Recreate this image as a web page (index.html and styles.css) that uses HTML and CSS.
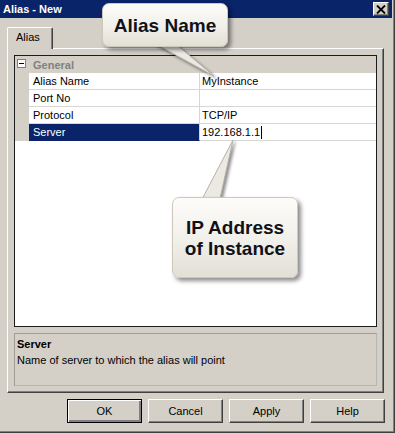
FILE: index.html
```html
<!DOCTYPE html>
<html>
<head>
<meta charset="utf-8">
<title>Alias - New</title>
<link rel="stylesheet" href="styles.css">
</head>
<body>
<div class="window">
  <div class="titlebar">
    <span class="title">Alias - New</span>
    <span class="close">
      <svg width="10" height="9" viewBox="0 0 10 9"><path d="M1 0.5 L9 8.5 M9 0.5 L1 8.5" stroke="#000" stroke-width="1.8" fill="none"/></svg>
    </span>
  </div>
  <div class="main">
    <div class="tabs"><div class="tab">Alias</div></div>
    <div class="panel">
      <div class="grid">
        <div class="row cat">
          <span class="gutter"><span class="toggle"></span></span>
          <span class="cat-name">General</span>
        </div>
        <div class="row">
          <span class="gutter"></span>
          <span class="name">Alias Name</span>
          <span class="value">MyInstance</span>
        </div>
        <div class="row">
          <span class="gutter"></span>
          <span class="name">Port No</span>
          <span class="value"></span>
        </div>
        <div class="row">
          <span class="gutter"></span>
          <span class="name">Protocol</span>
          <span class="value">TCP/IP</span>
        </div>
        <div class="row">
          <span class="gutter"></span>
          <span class="name selected">Server</span>
          <span class="value">192.168.1.1<span class="caret"></span></span>
        </div>
      </div>
      <div class="desc">
        <div class="desc-title">Server</div>
        <div class="desc-text">Name of server to which the alias will point</div>
      </div>
    </div>
    <div class="buttons">
      <button class="btn default">OK</button>
      <button class="btn">Cancel</button>
      <button class="btn">Apply</button>
      <button class="btn">Help</button>
    </div>
  </div>

  <div class="callout callout-alias">
    <svg class="tail" width="130" height="80" viewBox="0 0 130 80">
      <polygon points="48,38 70,38 112,73" />
    </svg>
    <div class="bubble">Alias Name</div>
  </div>

  <div class="callout callout-ip">
    <svg class="tail" width="126" height="70" viewBox="0 0 126 70">
      <polygon points="28,66 47,66 61,3" />
    </svg>
    <div class="bubble two">IP Address<br>of Instance</div>
  </div>
</div>
</body>
</html>
```

FILE: styles.css
```css
* { box-sizing: border-box; }

html, body {
  margin: 0;
  padding: 0;
  background: #d4d0c8;
}

body {
  font-family: "Liberation Sans", Arial, sans-serif;
  font-size: 11px;
  color: #000;
}

.window {
  position: relative;
  width: 395px;
  height: 433px;
  background: #d4d0c8;
  box-shadow: inset -1px -1px 0 #404040, inset -2px -2px 0 #808080;
  overflow: hidden;
}

.titlebar {
  height: 18px;
  margin-right: 3px;
  background: #0a246a;
  display: flex;
  align-items: center;
  justify-content: space-between;
  padding-left: 3px;
  padding-right: 3px;
}

.title {
  color: #fff;
  font-weight: bold;
  font-size: 11px;
  line-height: 18px;
}

.close {
  width: 16px;
  height: 14px;
  background: #d4d0c8;
  border-top: 1px solid #fff;
  border-left: 1px solid #fff;
  border-right: 1px solid #404040;
  border-bottom: 1px solid #404040;
  box-shadow: inset -1px -1px 0 #808080;
  display: flex;
  align-items: center;
  justify-content: center;
}

.main {
  padding: 9px 10px 0 7px;
}

.tabs {
  display: flex;
  height: 21px;
}

.tab {
  position: relative;
  z-index: 1;
  width: 46px;
  height: 22px;
  background: #d4d0c8;
  border-top: 1px solid #fff;
  border-left: 1px solid #fff;
  border-right: 1px solid #404040;
  box-shadow: inset -1px 0 0 #808080;
  border-radius: 2px 2px 0 0;
  padding-left: 8px;
  line-height: 19px;
}

.panel {
  width: 377px;
  height: 345px;
  border-top: 1px solid #fff;
  border-left: 1px solid #fff;
  border-right: 1px solid #404040;
  border-bottom: 1px solid #404040;
  box-shadow: inset -1px -1px 0 #808080;
  padding: 6px;
  display: flex;
  flex-direction: column;
  gap: 6px;
}

.grid {
  height: 272px;
  background: #fff;
  border: 1px solid #1c1c1c;
  display: flex;
  flex-direction: column;
}

.row {
  display: grid;
  grid-template-columns: 14px 171px 1fr;
  height: 17px;
  line-height: 16px;
}

.gutter {
  background: #d4d0c8;
  position: relative;
}

.row .name {
  padding-left: 4px;
  border-bottom: 1px solid #d8d6d0;
  border-right: 1px solid #d8d6d0;
  white-space: nowrap;
}

.row .value {
  padding-left: 2px;
  border-bottom: 1px solid #d8d6d0;
  white-space: nowrap;
  display: flex;
  align-items: center;
}

.row .name.selected {
  background: #0a246a;
  color: #fff;
  border-bottom-color: #0a246a;
}

.caret {
  display: inline-block;
  width: 1px;
  height: 13px;
  background: #000;
  margin-left: 1px;
}

.row.cat {
  background: #d4d0c8;
}

.cat-name {
  grid-column: 2 / 4;
  padding-left: 4px;
  font-weight: bold;
  color: #808080;
  padding-top: 1px;
}

.toggle {
  position: absolute;
  left: 2px;
  top: 3px;
  width: 9px;
  height: 9px;
  border: 1px solid #808080;
  background: #fff;
}

.toggle::after {
  content: "";
  position: absolute;
  left: 1px;
  top: 3px;
  width: 5px;
  height: 1px;
  background: #000;
}

.desc {
  height: 53px;
  border: 1px solid #a09d96;
  border-right-color: #b8b5ae;
  border-bottom-color: #b8b5ae;
  padding: 2px 2px;
  line-height: 16px;
}

.desc-title {
  font-weight: bold;
}

.buttons {
  display: flex;
  justify-content: flex-end;
  gap: 6px;
  margin-top: 6px;
  padding-right: 0;
}

.btn {
  width: 75px;
  height: 24px;
  font-family: "Liberation Sans", Arial, sans-serif;
  font-size: 11px;
  color: #000;
  background: #d4d0c8;
  border-top: 1px solid #fff;
  border-left: 1px solid #fff;
  border-right: 1px solid #404040;
  border-bottom: 1px solid #404040;
  box-shadow: inset -1px -1px 0 #808080;
  padding: 0;
  margin: 0;
}

.btn.default {
  border: 1px solid #000;
  box-shadow: inset 1px 1px 0 #fff, inset -2px -2px 0 #808080, inset -1px -1px 0 #404040;
}

.callout {
  position: absolute;
  z-index: 5;
}

.callout-alias {
  left: 102px;
  top: 3px;
  width: 126px;
  height: 44px;
}

.callout-ip {
  left: 172px;
  top: 197px;
  width: 126px;
  height: 81px;
}

.tail {
  position: absolute;
  left: 0;
  top: 0;
  overflow: visible;
  filter: drop-shadow(2px 2px 1.5px rgba(0, 0, 0, 0.45));
}

.tail polygon {
  fill: #ebe9e2;
  stroke: #b5b2a8;
  stroke-width: 1;
}

.callout-ip .tail {
  top: -60px;
}

.bubble {
  position: relative;
  width: 100%;
  height: 100%;
  border: 1px solid #cdc9bd;
  border-radius: 7px;
  background: linear-gradient(#fdfcf9, #f1efe9 55%, #e2dfd5);
  box-shadow: 3px 3px 4px rgba(0, 0, 0, 0.45);
  font-family: "Liberation Sans", Arial, sans-serif;
  font-weight: bold;
  font-size: 19px;
  color: #111118;
  display: flex;
  align-items: center;
  justify-content: center;
  text-align: center;
  line-height: 21px;
}
```
